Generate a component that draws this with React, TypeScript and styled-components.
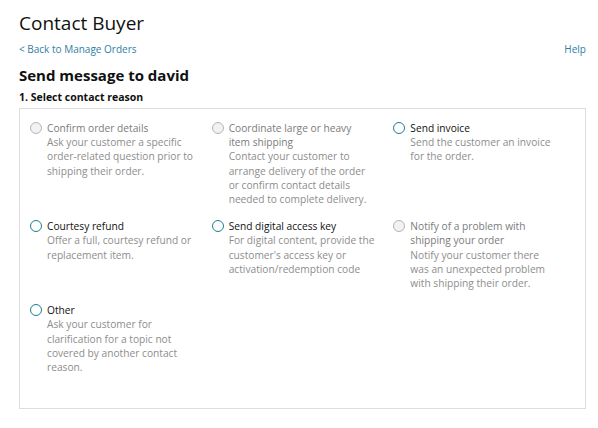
import React from "react";
import styled, { createGlobalStyle } from "styled-components";

const Global = createGlobalStyle`
  html, body { margin: 0; padding: 0; background: #fff; }
  body { font-family: "Open Sans", "Noto Sans", Arial, sans-serif; color: #0f1111; }
`;

const Page = styled.div`
  padding: 10px 12px 0 19px;
  display: flex;
  flex-direction: column;
`;

const Title = styled.h1`
  margin: 0;
  font-size: 19px;
  font-weight: 400;
  line-height: 27px;
  color: #0f1111;
`;

const NavRow = styled.div`
  display: flex;
  justify-content: space-between;
  margin-top: 5px;
  font-size: 10px;
  line-height: 14px;
`;

const Link = styled.a`
  color: #2f7ea6;
  text-decoration: none;
`;

const Heading = styled.h2`
  margin: 8px 0 0;
  font-size: 15px;
  font-weight: 700;
  line-height: 22px;
`;

const SubHeading = styled.h3`
  margin: 4px 0 0;
  font-size: 10.5px;
  font-weight: 700;
  line-height: 15px;
`;

const Box = styled.div`
  margin-top: 3px;
  border: 1px solid #ddd;
  padding: 12px 10px 34px 10px;
  display: grid;
  grid-template-columns: repeat(3, 1fr);
  row-gap: 13px;
`;

const Option = styled.label<{ $disabled?: boolean }>`
  display: flex;
  gap: 5px;
  align-items: flex-start;
  font-size: 10.2px;
  line-height: 14.2px;
  cursor: ${(p) => (p.$disabled ? "default" : "pointer")};
`;

const Radio = styled.span<{ $disabled?: boolean }>`
  flex: 0 0 auto;
  width: 12px;
  height: 12px;
  box-sizing: border-box;
  border-radius: 50%;
  margin-top: 1px;
  border: 1.3px solid ${(p) => (p.$disabled ? "#b5b5b5" : "#1a7f8e")};
  background: ${(p) => (p.$disabled ? "#f2f2f2" : "#fff")};
`;

const Texts = styled.div`
  display: flex;
  flex-direction: column;
  max-width: 146px;
`;

const Label = styled.span<{ $disabled?: boolean }>`
  color: ${(p) => (p.$disabled ? "#7b7b7b" : "#0f1111")};
`;

const Desc = styled.span`
  color: #8d8d8d;
`;

type Opt = { label: string; desc: string; disabled?: boolean };

const options: Opt[] = [
  {
    label: "Confirm order details",
    desc: "Ask your customer a specific order-related question prior to shipping their order.",
    disabled: true,
  },
  {
    label: "Coordinate large or heavy item shipping",
    desc: "Contact your customer to arrange delivery of the order or confirm contact details needed to complete delivery.",
    disabled: true,
  },
  { label: "Send invoice", desc: "Send the customer an invoice for the order." },
  { label: "Courtesy refund", desc: "Offer a full, courtesy refund or replacement item." },
  {
    label: "Send digital access key",
    desc: "For digital content, provide the customer's access key or activation/redemption code",
  },
  {
    label: "Notify of a problem with shipping your order",
    desc: "Notify your customer there was an unexpected problem with shipping their order.",
    disabled: true,
  },
  {
    label: "Other",
    desc: "Ask your customer for clarification for a topic not covered by another contact reason.",
  },
];

export default function App() {
  return (
    <>
      <Global />
      <Page>
        <Title>Contact Buyer</Title>
        <NavRow>
          <Link href="#">&lt; Back to Manage Orders</Link>
          <Link href="#">Help</Link>
        </NavRow>
        <Heading>Send message to david</Heading>
        <SubHeading>1. Select contact reason</SubHeading>
        <Box>
          {options.map((o) => (
            <Option key={o.label} $disabled={o.disabled}>
              <Radio $disabled={o.disabled} />
              <Texts>
                <Label $disabled={o.disabled}>{o.label}</Label>
                <Desc>{o.desc}</Desc>
              </Texts>
            </Option>
          ))}
        </Box>
      </Page>
    </>
  );
}
